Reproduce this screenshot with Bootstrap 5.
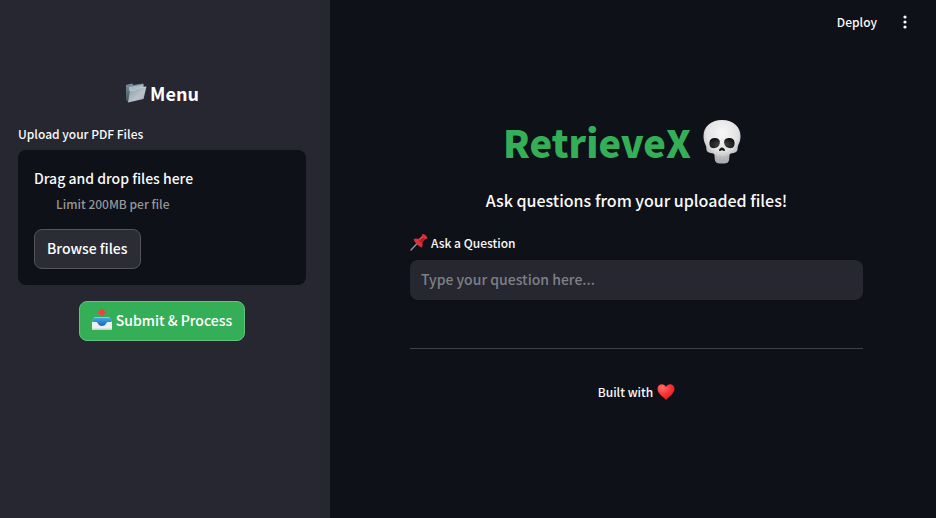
<!DOCTYPE html>
<html lang="en" data-bs-theme="dark">
<head>
<meta charset="utf-8">
<meta name="viewport" content="width=device-width, initial-scale=1">
<title>RetrieveX</title>
<link href="https://cdn.jsdelivr.net/npm/bootstrap@5.3.0/dist/css/bootstrap.min.css" rel="stylesheet">
<style>
  body { background: #0e1117; color: #fafafa; font-family: "Noto Sans CJK JP", "Noto Sans", sans-serif; font-size: 14px; line-height: 24px; font-weight: 500; }
  .side { flex: 0 0 330px; background: #262730; padding: 79px 24px 24px 18px; }
  .small-text { font-size: 12px; line-height: 20px; font-weight: 500; }
  .side-title { font-size: 18px; line-height: 28px; font-weight: 700; gap: 3px; margin-bottom: 17px; }
  .upload-label { margin-bottom: 6px; }
  .dropzone { background: #0e1117; border-radius: 8px; padding: 16px; }
  .limit { color: #95969b; padding-left: 22px; margin: 4px 0 15px; }
  .app-btn { height: 40px; padding: 0 12px 2px; font-size: 14px; line-height: 24px; font-weight: 500; color: #fff; border-radius: 8px; }
  .browse { background: #2b2c36; border-color: #53545c; }
  .submit { background: #34af57; border-color: #63c27d; gap: 4px; }
  .top-bar { height: 44px; padding: 0 22px; gap: 19px; }
  .bar-btn { background: none; border: 0; padding: 0; color: #fafafa; }
  .content { padding: 69px 73px 24px 80px; }
  .app-title { font-size: 38px; line-height: 58px; font-weight: 900; color: #34af57; gap: 11px; padding-right: 28px; }
  .intro { font-size: 16px; line-height: 26px; font-weight: 500; margin-bottom: 20px; }
  .question-label { margin-bottom: 7px; gap: 3px; }
  .question, .question:focus { height: 40px; padding: 0 11px 2px; background: #262730; border: 0; border-radius: 8px; color: #fafafa; font-size: 14px; font-weight: 500; }
  .question::placeholder { color: #7f8086; opacity: 1; }
  .rule { border-color: #414247; opacity: 1; margin: 48px 0 33px; }
</style>
<script src="https://cdn.jsdelivr.net/npm/bootstrap@5.3.0/dist/js/bootstrap.bundle.min.js" defer></script>
</head>
<body>
<div class="d-flex min-vh-100">
  <aside class="side">
    <h2 class="side-title d-flex justify-content-center align-items-center">
      <svg width="22" height="22" viewBox="0 0 22 22" aria-hidden="true">
        <defs>
          <linearGradient id="fb" x1="0" y1="0" x2="0" y2="1"><stop offset="0" stop-color="#78909c"/><stop offset="1" stop-color="#3f505b"/></linearGradient>
          <linearGradient id="ff" x1="0" y1="0" x2="1" y2="1"><stop offset="0" stop-color="#8799a4"/><stop offset=".6" stop-color="#b9c3cb"/><stop offset="1" stop-color="#98a5b0"/></linearGradient>
        </defs>
        <path d="M1 3 7 1.500 8.500 3 18 1.500 19 3v13L3 20 1 18Z" fill="url(#fb)"/>
        <path d="M4 5 18 2.500V6L4 9Z" fill="#a9b9c1"/>
        <path d="M5 8.500 11 7.500 12.500 6 21.500 4.500 18.500 17 3 20.500Z" fill="url(#ff)"/>
        <path d="M5 8.800 11 7.800 12.500 6.300 21 5" fill="none" stroke="#d3dce1" stroke-width=".6"/>
      </svg>
      <span>Menu</span>
    </h2>
    <div class="small-text upload-label" id="upload-label">Upload your PDF Files</div>
    <section class="dropzone" aria-labelledby="upload-label">
      <div>Drag and drop files here</div>
      <div class="small-text limit">Limit 200MB per file</div>
      <button type="button" class="btn app-btn browse">Browse files</button>
    </section>
    <div class="d-flex justify-content-center mt-3">
      <button type="button" class="btn app-btn submit d-flex align-items-center">
        <svg width="20" height="22" viewBox="0 0 20 22" aria-hidden="true">
          <defs><linearGradient id="tr" x1="0" y1="0" x2="0" y2="1"><stop offset="0" stop-color="#47a8ed"/><stop offset="1" stop-color="#1463ae"/></linearGradient></defs>
          <path d="M2.500 8h15L20 14H0Z" fill="#d5e5ef"/>
          <path d="M2 8.500h16l1.500 5-5.500 4H6l-5.500-4Z" fill="url(#tr)"/>
          <path d="M0 13h4.500c1.300 0 1.500 4 5.500 4s4.200-4 5.500-4H20v7q0 1-1 1H1q-1 0-1-1Z" fill="#edf0f1"/>
          <path d="M0 19.500h20v.5q0 1-1 1H1q-1 0-1-1Z" fill="#cbd1d3"/>
          <path d="M7.500.5h5v2.500h2L10 7.500 5.500 3h2Z" fill="#ef4142"/>
        </svg>
        <span>Submit &amp; Process</span>
      </button>
    </div>
  </aside>
  <div class="flex-grow-1">
    <header class="top-bar d-flex justify-content-end align-items-center">
      <button type="button" class="bar-btn small-text">Deploy</button>
      <button type="button" class="bar-btn d-flex" aria-label="Main menu">
        <svg width="18" height="18" viewBox="0 0 18 18" fill="currentColor" aria-hidden="true"><circle cx="9" cy="4" r="1.600"/><circle cx="9" cy="9" r="1.600"/><circle cx="9" cy="14" r="1.600"/></svg>
      </button>
    </header>
    <main class="content">
      <h1 class="app-title d-flex justify-content-center align-items-center mb-3">
        <span>RetrieveX</span>
        <svg width="40" height="46" viewBox="0 0 40 46" aria-hidden="true">
          <defs>
            <radialGradient id="sk" cx=".5" cy=".3" r=".65"><stop offset="0" stop-color="#f7f7f7"/><stop offset=".65" stop-color="#e2e2e3"/><stop offset="1" stop-color="#a9abae"/></radialGradient>
            <radialGradient id="ey" cx=".5" cy=".65" r=".6"><stop offset="0" stop-color="#4b4b4d"/><stop offset="1" stop-color="#111214"/></radialGradient>
          </defs>
          <path d="M20 1C8.500 1 1.500 8 1.500 17c0 5 1.500 7.500 2.500 10 .8 2.500-.5 5 3 6.500 2 .9 4 .5 5 1.500 1.200 1.300.2 5.500 1.500 7.500 1 2 3.500 2 6.500 2s5.500 0 6.500-2c1.300-2 .3-6.200 1.500-7.500 1-1 3-.6 5-1.500 3.500-1.500 2.200-4 3-6.500 1-2.500 2.500-5 2.500-10C38.500 8 31.500 1 20 1Z" fill="url(#sk)"/>
          <path d="M7.500 23c.5-4 4-4.500 7-3.800 3.200.7 3.700 3 3.200 5.600-.5 2.800-3 4.400-6 4.400-3.300 0-4.700-2.500-4.200-6.200ZM32.500 23c-.5-4-4-4.500-7-3.800-3.200.7-3.700 3-3.200 5.600.5 2.800 3 4.400 6 4.400 3.300 0 4.700-2.500 4.200-6.200Z" fill="url(#ey)"/>
          <path d="M20 28.500c1.500 0 3.300 2 3 3-.4 1-2 .7-3-.5-1 1.200-2.600 1.500-3 .5-.3-1 1.500-3 3-3Z" fill="#171719"/>
          <path d="M13.500 37.500c4 1.500 9 1.500 13 0" fill="none" stroke="#b8b8ba" stroke-width=".8"/>
          <path d="M14.500 36.500v6M18.200 37v7M21.800 37v7M25.500 36.500v6" stroke="#b1b1b4" stroke-width=".8"/>
        </svg>
      </h1>
      <p class="intro text-center">Ask questions from your uploaded files!</p>
      <label for="question" class="small-text question-label d-flex align-items-center">
        <svg width="18" height="18" viewBox="0 0 18 18" aria-hidden="true">
          <path d="M1 16 8 8.500" stroke="#8f9ba3" stroke-width="1.300" stroke-linecap="round"/>
          <path d="M3.500 5.500C5 4 7 4.500 8.500 5L12 2Q11 .5 13 0q3 .5 4.500 4-1 1.500-2.500 1L12.200 9c.8 2 .5 3.500-.7 4.500Q6 11 3.500 5.500Z" fill="#dc3038"/>
          <path d="M8.500 5 12 2Q13 4 15 5L12.200 9Q9.500 8 8.500 5Z" fill="#b31d2a"/>
          <path d="M9.500 5.500 12.800 2.800" stroke="#f26b6e" stroke-width="1"/>
        </svg>
        <span>Ask a Question</span>
      </label>
      <input type="text" id="question" class="form-control question" placeholder="Type your question here...">
      <hr class="rule">
      <p class="small-text d-flex justify-content-center align-items-center gap-1 mb-0">
        <span>Built with</span>
        <svg width="18" height="18" viewBox="0 0 18 18" role="img" aria-label="love">
          <defs><radialGradient id="ht" cx=".3" cy=".2" r=".9"><stop offset="0" stop-color="#ff7065"/><stop offset=".5" stop-color="#fb3434"/><stop offset="1" stop-color="#dd151f"/></radialGradient></defs>
          <path d="M9 17C6 14 .5 10.500.5 5.800.5 1 6.800-.5 9 4c2.200-4.500 8.500-3 8.500 1.800C17.500 10.500 12 14 9 17Z" fill="url(#ht)"/>
        </svg>
      </p>
    </main>
  </div>
</div>
</body>
</html>
